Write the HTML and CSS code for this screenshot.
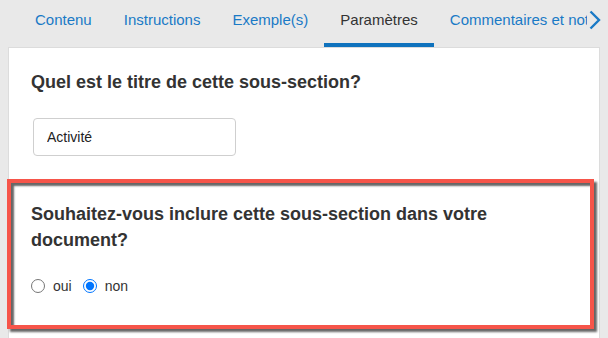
FILE: index.html
```html
<!DOCTYPE html>
<html lang="fr">
<head>
<meta charset="utf-8">
<title>Paramètres</title>
<link rel="stylesheet" href="styles.css">
</head>
<body>
  <div class="tabbar">
    <div class="tabs">
      <a class="tab">Contenu</a>
      <a class="tab">Instructions</a>
      <a class="tab">Exemple(s)</a>
      <a class="tab active">Paramètres</a>
      <a class="tab">Commentaires et notes</a>
    </div>
    <button class="next" aria-label="Suivant">
      <svg width="12" height="20" viewBox="0 0 12 20"><path d="M1.5 1.5 L10 10 L1.5 18.5" fill="none" stroke="#1a7ac6" stroke-width="2.4"/></svg>
    </button>
  </div>
  <div class="panel">
    <div class="section">
      <h2 class="question">Quel est le titre de cette sous-section?</h2>
      <input class="text-input" type="text" value="Activité">
    </div>
    <div class="section highlight">
      <h2 class="question">Souhaitez-vous inclure cette sous-section dans votre document?</h2>
      <div class="choices">
        <label class="choice"><input type="radio" name="inc"><span>oui</span></label>
        <label class="choice"><input type="radio" name="inc" checked><span>non</span></label>
      </div>
    </div>
  </div>
</body>
</html>
```

FILE: styles.css
```css
html, body {
  margin: 0;
  padding: 0;
  background: #e9e9e9;
  font-family: "Liberation Sans", Arial, sans-serif;
  overflow: hidden;
}

.tabbar {
  display: flex;
  height: 47px;
}

.tabs {
  display: flex;
  flex: 1;
  overflow: hidden;
  white-space: nowrap;
  padding-left: 19px;
}

.tab {
  display: block;
  flex: none;
  padding: 10px 16px 13px;
  line-height: 20px;
  font-size: 15px;
  color: #1a7ac6;
  border-bottom: 4px solid transparent;
}

.tab.active {
  color: #333;
  border-bottom-color: #0f72bd;
}

.next {
  flex: none;
  width: 21px;
  height: 47px;
  padding: 10px 0 0 2px;
  margin: 0;
  border: 0;
  background: #e9e9e9;
  display: flex;
  align-items: flex-start;
}

.panel {
  margin-left: 8px;
  width: 592px;
  box-sizing: border-box;
  border: 1px solid #dcdcdc;
  border-bottom: 0;
  background: #fff;
  height: 291px;
}

.section {
  padding: 21px 0 23px 22px;
}

.question {
  margin: 0;
  font-size: 18px;
  line-height: 26px;
  font-weight: bold;
  color: #333;
}

.text-input {
  display: block;
  margin: 23px 0 0 2px;
  width: 203px;
  height: 38px;
  box-sizing: border-box;
  border: 1px solid #cfcfcf;
  border-radius: 4px;
  padding: 0 13px;
  font-family: "Liberation Sans", Arial, sans-serif;
  font-size: 14px;
  color: #222;
  outline: none;
}

.highlight {
  margin-left: -2px;
  width: 587px;
  height: 150px;
  box-sizing: border-box;
  border: 4px solid #f6554a;
  padding: 18px 40px 0 20px;
  box-shadow: 3px 3px 2px rgba(0, 0, 0, 0.6), inset 3px 3px 2px rgba(0, 0, 0, 0.6);
}

.choices {
  display: flex;
  align-items: center;
  margin-top: 23px;
  height: 20px;
}

.choice {
  display: flex;
  align-items: center;
  font-size: 14px;
  line-height: 20px;
  color: #333;
  margin-right: 11px;
}

.choice input {
  margin: 0 8px 0 0;
  width: 14px;
  height: 14px;
}
```
